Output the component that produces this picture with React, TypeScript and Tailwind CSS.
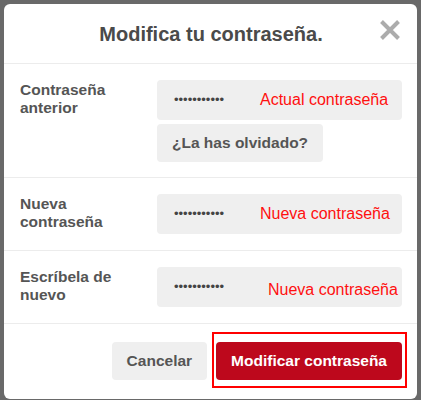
import React from "react";

const font = { fontFamily: '"Liberation Sans", Arial, sans-serif' };

function PwInput({ hint, offset }: { hint: string; offset: string }) {
  return (
    <div className="relative h-[40px] w-full rounded-[4px] bg-[#efefef]">
      <span className="absolute left-[17px] top-[11px] text-[13px] leading-[18px] text-[#444]">
        •••••••••••
      </span>
      <span className={`absolute text-[16px] leading-[18px] text-[#ff1010] ${offset}`}>{hint}</span>
    </div>
  );
}

export default function App() {
  return (
    <div className="h-[400px] w-[421px] bg-[#696969] px-[4px] pt-[4px]" style={font}>
      <div className="flex h-[395px] w-[413px] flex-col rounded-[6px] bg-white">
        <div className="relative flex h-[60px] items-center justify-center border-b border-[#ececec]">
          <h1 className="pl-[1px] text-[20px] font-bold leading-[24px] text-[#4a4a4a]">Modifica tu contraseña.</h1>
          <svg className="absolute left-[376px] top-[16px]" width="20" height="20" viewBox="0 0 20 20">
            <path d="M1.5 1.5 L18.5 18.5 M18.5 1.5 L1.5 18.5" stroke="#acacac" strokeWidth="4" fill="none" />
          </svg>
        </div>

        <div className="flex border-b border-[#ececec] pb-[15px] pl-[16px] pr-[15px] pt-[16px]">
          <div className="w-[137px] shrink-0 pt-[1px] text-[15.5px] font-bold leading-[18px] text-[#555]">
            Contraseña<br />anterior
          </div>
          <div className="flex flex-1 flex-col items-start gap-[4px]">
            <PwInput hint="Actual contraseña" offset="left-[103px] top-[11px]" />
            <button className="h-[38px] rounded-[4px] bg-[#efefef] px-[15px] text-[15.5px] font-bold text-[#555]">
              ¿La has olvidado?
            </button>
          </div>
        </div>

        <div className="flex border-b border-[#ececec] pb-[16px] pl-[16px] pr-[15px] pt-[16px]">
          <div className="w-[137px] shrink-0 pt-[1px] text-[15.5px] font-bold leading-[18px] text-[#555]">
            Nueva<br />contraseña
          </div>
          <div className="flex-1">
            <PwInput hint="Nueva contraseña" offset="left-[103px] top-[11px]" />
          </div>
        </div>

        <div className="flex border-b border-[#ececec] pb-[16px] pl-[16px] pr-[15px] pt-[16px]">
          <div className="w-[137px] shrink-0 pt-[1px] text-[15.5px] font-bold leading-[18px] text-[#555]">
            Escríbela de<br />nuevo
          </div>
          <div className="flex-1">
            <PwInput hint="Nueva contraseña" offset="left-[111px] top-[14px]" />
          </div>
        </div>

        <div className="flex flex-1 items-start justify-end pr-[10px] pt-[8px]">
          <button className="mt-[10px] h-[38px] rounded-[4px] bg-[#efefef] px-[15px] text-[15.5px] font-bold text-[#555]">
            Cancelar
          </button>
          <div className="ml-[5px] border-2 border-[#ff0000] pb-[6px] pl-[2px] pr-[3px] pt-[8px]">
            <button className="h-[38px] rounded-[4px] bg-[#bd081c] px-[15px] text-[15.5px] font-bold text-white">
              Modificar contraseña
            </button>
          </div>
        </div>
      </div>
    </div>
  );
}
